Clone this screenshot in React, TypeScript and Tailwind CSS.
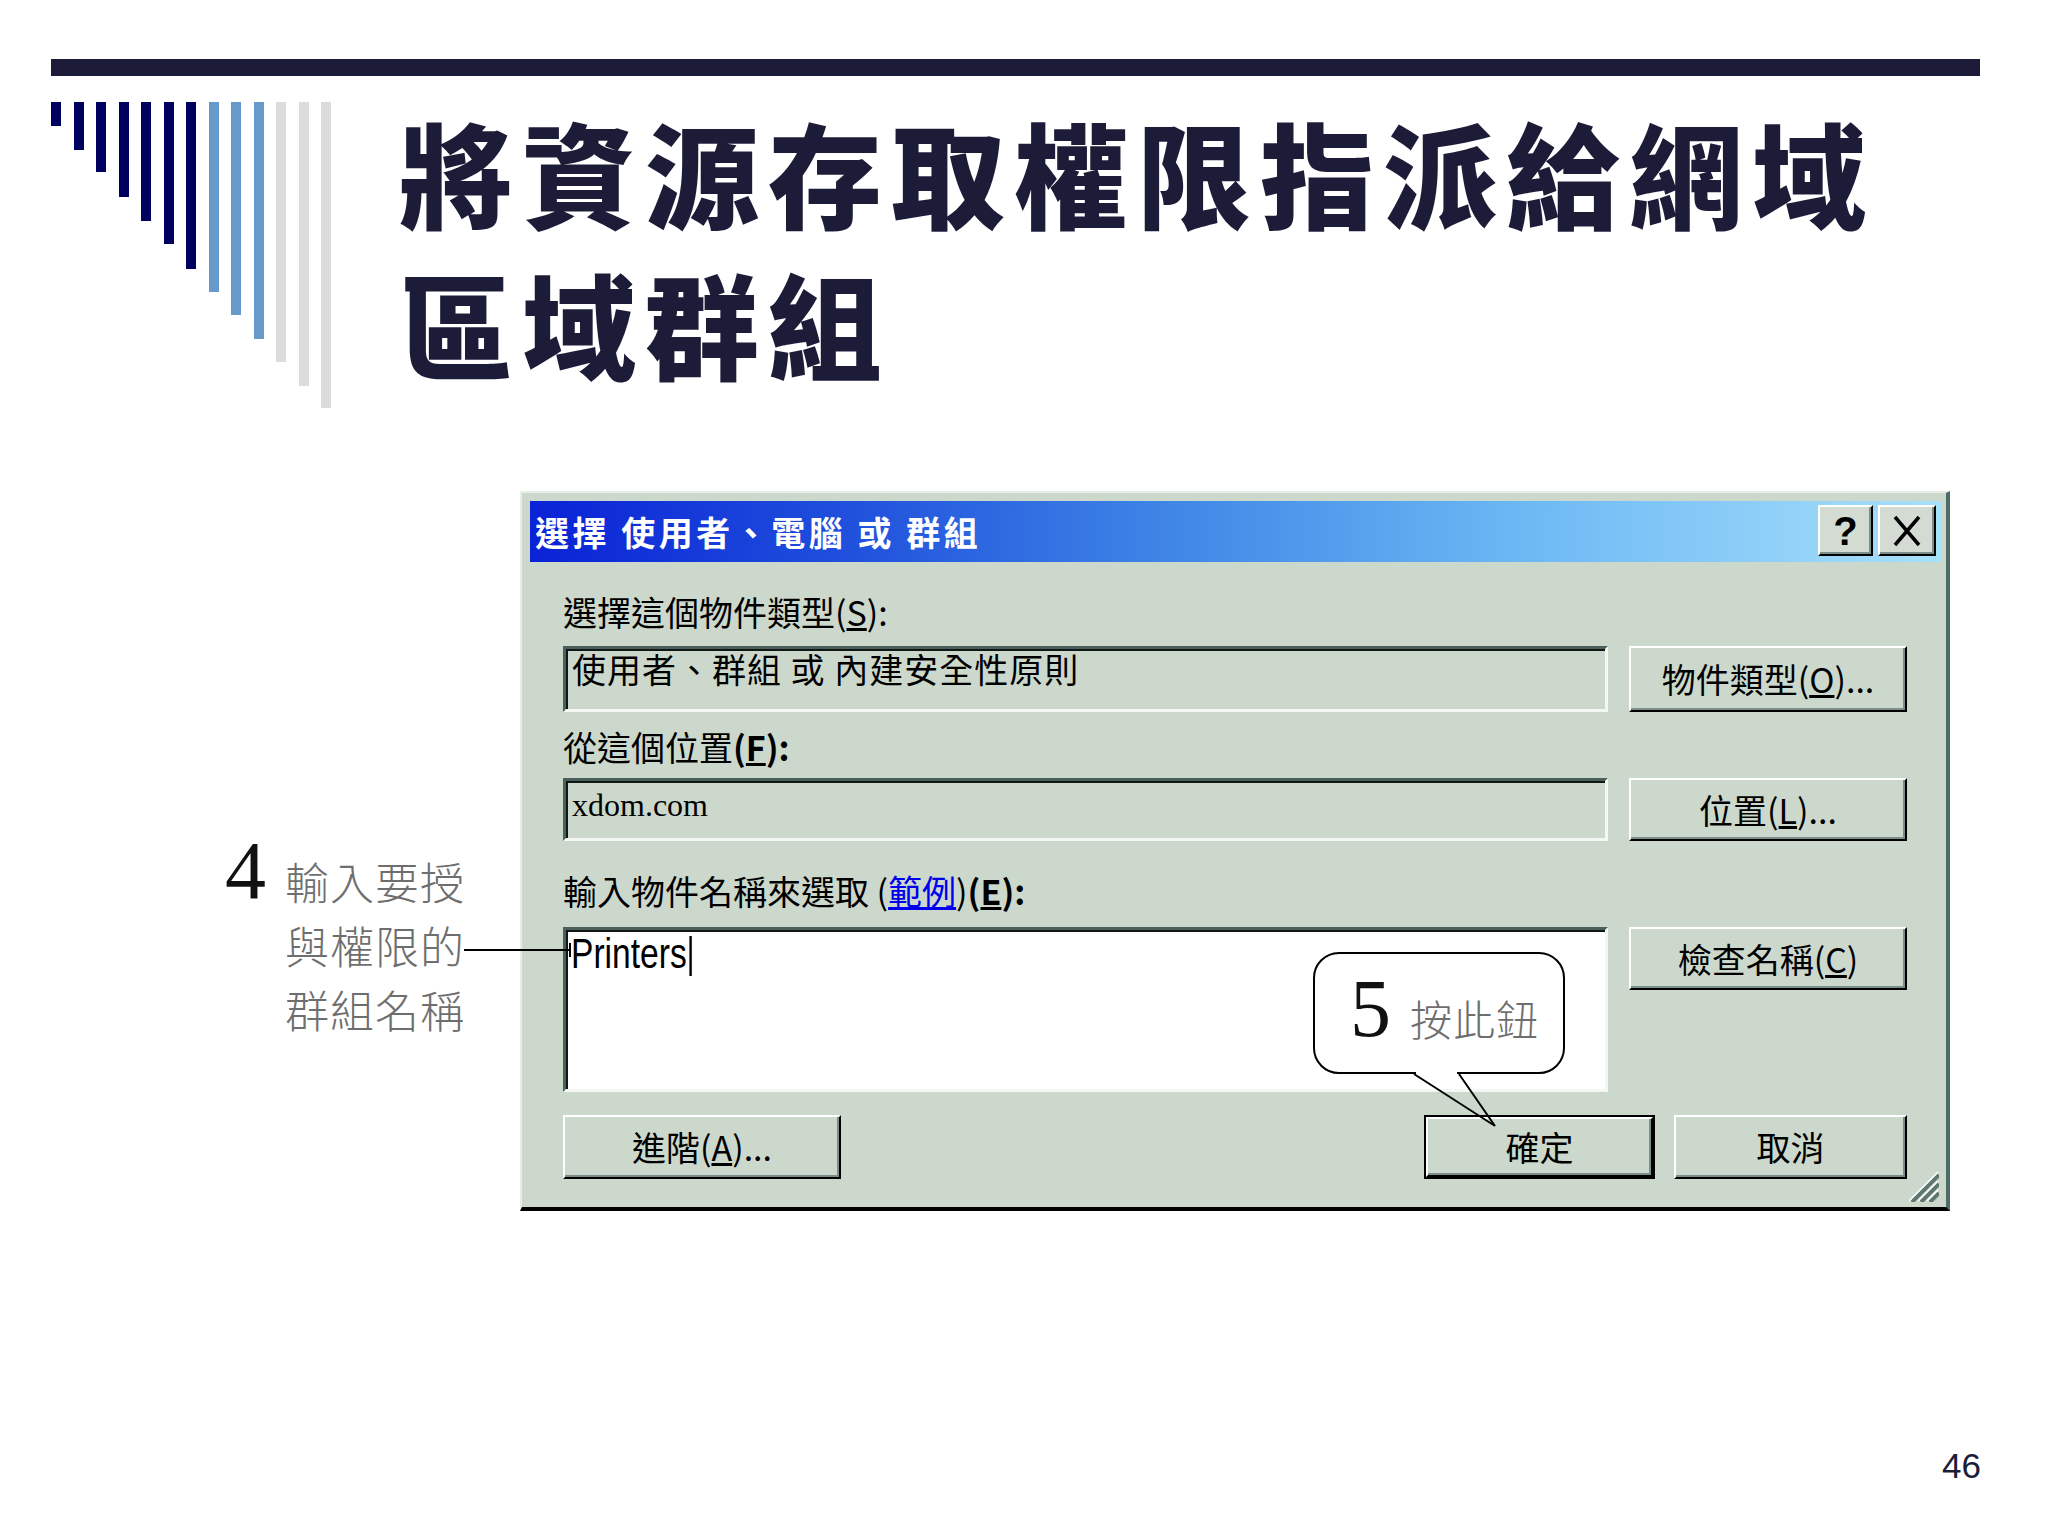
import React from 'react';

const CJK = "font-['Noto_Sans_CJK_TC',sans-serif]";

// stripe heights written out in full so Tailwind picks them up
const STRIPES = [
  'h-[24px] bg-[#000060]',
  'h-[48px] bg-[#000060]',
  'h-[70px] bg-[#000060]',
  'h-[95px] bg-[#000060]',
  'h-[119px] bg-[#000060]',
  'h-[142px] bg-[#000060]',
  'h-[167px] bg-[#000060]',
  'h-[190px] bg-[#6699cc]',
  'h-[213px] bg-[#6699cc]',
  'h-[237px] bg-[#6699cc]',
  'h-[260px] bg-[#dcdcdc]',
  'h-[284px] bg-[#dcdcdc]',
  'h-[306px] bg-[#dcdcdc]',
];

function Btn({ children, className = '' }: { children: React.ReactNode; className?: string }) {
  return (
    <div
      className={`flex items-center justify-center border-t-2 border-l-2 border-t-white border-l-white border-r-2 border-b-2 border-r-black border-b-black shadow-[inset_-2px_-2px_0_#7a8f8b] text-[34px] leading-[40px] text-black ${className}`}
    >
      {children}
    </div>
  );
}

function Field({ children, className = '' }: { children?: React.ReactNode; className?: string }) {
  return (
    <div
      className={`border-t-[3px] border-l-[3px] border-t-[#4a605c] border-l-[#4a605c] border-b-[3px] border-r-[3px] border-b-[#f4f7f4] border-r-[#f4f7f4] shadow-[inset_2px_2px_0_#101614] ${className}`}
    >
      {children}
    </div>
  );
}

function TitleButton({ children, className = '' }: { children: React.ReactNode; className?: string }) {
  return (
    <div
      className={`h-[51px] flex items-center justify-center bg-[#d3dbd3] border-t-2 border-l-2 border-t-white border-l-white border-r-2 border-b-2 border-r-black border-b-black shadow-[inset_-2px_-2px_0_#7a8f8b] ${className}`}
    >
      {children}
    </div>
  );
}

function Dialog() {
  return (
    <div className={`relative w-[1430px] h-[720px] bg-[#cdd8cd] border-t-2 border-l-2 border-t-[#e8ede8] border-l-[#e8ede8] border-r-4 border-r-[#4e6c68] border-b-4 border-b-black ${CJK}`}>
      {/* title bar */}
      <div className="ml-[8px] mt-[8px] w-[1412px] h-[61px] flex items-start bg-[linear-gradient(90deg,#0a22d6_0%,#1f4fdc_22%,#3f85e6_45%,#6cb8f4_70%,#a8e0fa_100%)]">
        <div className="pl-[5px] text-white font-bold text-[34px] leading-[61px] tracking-[3.5px] whitespace-nowrap">
          選擇 使用者、電腦 或 群組
        </div>
        <div className="ml-auto mt-[4px] mr-[6px] flex gap-[5px]">
          <TitleButton className="w-[55px]">
            <span className="font-['Liberation_Sans',sans-serif] font-bold text-[40px] leading-[40px] text-black">?</span>
          </TitleButton>
          <TitleButton className="w-[58px]">
            <svg width="32" height="34" viewBox="0 0 32 34">
              <path d="M4 3 L28 31 M28 3 L4 31" stroke="#000" strokeWidth="3.5" fill="none" />
            </svg>
          </TitleButton>
        </div>
      </div>

      {/* body */}
      <div className="pl-[41px] text-black">
        <div className="mt-[30px] h-[40px] text-[34px] leading-[40px] whitespace-nowrap">
          選擇這個物件類型(<span className="underline">S</span>):
        </div>
        <div className="mt-[14px] flex gap-[21px]">
          <Field className="w-[1045px] h-[66px] pl-[6px]">
            <div className="text-[34px] leading-[40px] tracking-[1px] whitespace-nowrap">使用者、群組 或 內建安全性原則</div>
          </Field>
          <Btn className="w-[278px] h-[66px]">
            物件類型(<span className="underline">O</span>)...
          </Btn>
        </div>

        <div className="mt-[15px] h-[40px] text-[34px] leading-[40px] whitespace-nowrap">
          從這個位置<span className="font-semibold">(<span className="underline">F</span>):</span>
        </div>
        <div className="mt-[11px] flex gap-[21px]">
          <Field className="w-[1045px] h-[63px] pl-[6px] pt-[4px]">
            <div className="font-['Liberation_Serif',serif] text-[32px] leading-[40px]">xdom.com</div>
          </Field>
          <Btn className="w-[278px] h-[63px]">
            位置(<span className="underline">L</span>)...
          </Btn>
        </div>

        <div className="mt-[30px] h-[40px] text-[34px] leading-[40px] whitespace-nowrap">
          輸入物件名稱來選取 (<span className="text-[#0000ee] underline">範例</span>)<span className="font-semibold">(<span className="underline">E</span>):</span>
        </div>
        <div className="mt-[16px] flex items-start gap-[21px]">
          <Field className="w-[1045px] h-[165px] pl-[5px] bg-white border-b-[#e6ebe6] border-r-[#e6ebe6]">
            <div className="origin-left scale-x-[0.8] font-['Liberation_Sans',sans-serif] text-[42px] leading-[48px] whitespace-nowrap">
              Printers
              <span className="inline-block ml-[3px] w-[3px] h-[40px] bg-black align-[-8px]" />
            </div>
          </Field>
          <Btn className="w-[278px] h-[63px]">
            檢查名稱(<span className="underline">C</span>)
          </Btn>
        </div>

        <div className="mt-[23px] flex w-[1344px]">
          <Btn className="w-[278px] h-[64px]">
            進階(<span className="underline">A</span>)...
          </Btn>
          <div className="flex-1" />
          <div className="w-[231px] h-[64px] border-2 border-black">
            <Btn className="w-full h-full">確定</Btn>
          </div>
          <Btn className="ml-[19px] w-[233px] h-[64px]">取消</Btn>
        </div>
      </div>

      {/* resize grip */}
      <svg className="absolute right-[7px] bottom-[5px]" width="30" height="33" viewBox="0 0 30 33">
        <path d="M3 33 L30 6 M12 33 L30 15 M21 33 L30 24" stroke="#5f7773" strokeWidth="4" fill="none" />
        <path d="M0 32 L29 3 M9 32 L29 12 M18 32 L29 21" stroke="#ffffff" strokeWidth="1.5" fill="none" />
      </svg>
    </div>
  );
}

export default function App() {
  return (
    <div className={`relative w-[2048px] h-[1536px] overflow-hidden bg-white ${CJK}`}>
      {/* top rule */}
      <div className="ml-[51px] mt-[59px] h-[17px] w-[1929px] bg-[#1c1c38]" />

      {/* stripes + title */}
      <div className="mt-[26px] flex items-start h-[306px]">
        <div className="ml-[51px] flex items-start gap-[12.5px]">
          {STRIPES.map((cls, i) => (
            <div key={i} className={`w-[10px] ${cls}`} />
          ))}
        </div>
        <h1 className="ml-[68px] -mt-[7px] text-[114px] leading-[151px] tracking-[9px] font-black text-[#1c1c38] whitespace-nowrap">
          <div>將資源存取權限指派給網域</div>
          <div>區域群組</div>
        </h1>
      </div>

      {/* annotation + dialog */}
      <div className="mt-[83px] flex items-start">
        <div className="w-[520px] flex items-start pl-[225px]">
          <div className="mt-[338px] font-['Liberation_Serif',serif] text-[82px] leading-[84px] text-[#111]">4</div>
          <div className="mt-[358px] ml-[19px] text-[44px] leading-[64px] font-light text-[#6e6e6e] tracking-[1px]">
            <div>輸入要授</div>
            <div>與權限的</div>
            <div>群組名稱</div>
          </div>
        </div>
        <Dialog />
      </div>

      {/* page number */}
      <div className="mt-[235px] flex justify-end pr-[67px]">
        <span className="font-['Liberation_Sans',sans-serif] text-[35px] leading-[40px] text-[#1c1c38]">46</span>
      </div>

      {/* connector line for note 4 */}
      <div className="absolute left-[464px] top-[949px] w-[106px] h-[2px] bg-black" />
      <div className="absolute left-[569px] top-[943px] w-[2px] h-[14px] bg-black" />

      {/* callout 5 */}
      <div className="absolute left-[1313px] top-[952px] w-[252px] h-[122px] rounded-[26px] border-2 border-black bg-white flex items-start">
        <div className="ml-[35px] mt-[13px] font-['Liberation_Serif',serif] text-[82px] leading-[84px] text-[#111]">5</div>
        <div className="ml-[19px] mt-[39px] text-[42px] leading-[50px] font-light text-[#6e6e6e] tracking-[1px]">按此鈕</div>
      </div>
      <svg className="absolute left-[1400px] top-[1068px]" width="110" height="64" viewBox="0 0 110 64">
        <rect x="16" y="3" width="41" height="6" fill="#ffffff" />
        <path d="M14 6 L95 58 M59 6 L95 58" stroke="#000" strokeWidth="2" fill="none" />
      </svg>
    </div>
  );
}
